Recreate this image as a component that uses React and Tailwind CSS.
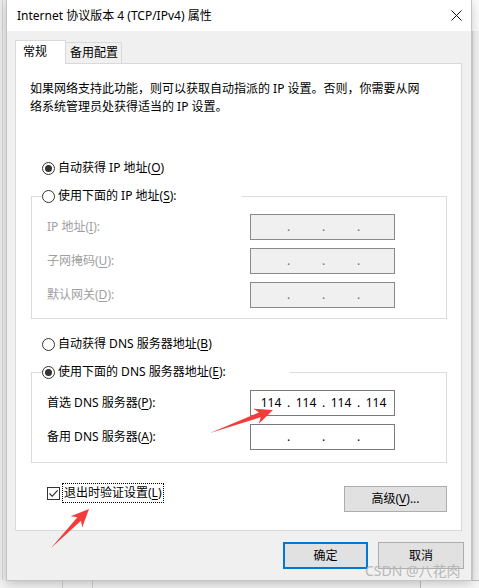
import React from "react";

const U = ({ children }) => <span className="underline underline-offset-[2px]">{children}</span>;

function Radio({ checked }) {
  return (
    <span className="flex h-[13px] w-[13px] shrink-0 items-center justify-center rounded-full border border-[#333333] bg-white">
      {checked && <span className="h-[7px] w-[7px] rounded-full bg-[#333333]" />}
    </span>
  );
}

function IpBox({ value, disabled }) {
  const parts = value || ["", "", "", ""];
  return (
    <div
      className={
        "flex h-[26px] w-[145px] items-center border pl-[6px] " +
        (disabled ? "border-[#8a8a8a] bg-[#f0f0f0] text-[#6d6d6d]" : "border-[#7a7a7a] bg-white text-black")
      }
    >
      {parts.map((p, i) => (
        <React.Fragment key={i}>
          <span className="w-[28px] text-center">{p}</span>
          {i < 3 && <span className="w-[7px] text-center">.</span>}
        </React.Fragment>
      ))}
    </div>
  );
}

function Row({ label, disabled, value }) {
  return (
    <div className="flex items-center">
      <span className={"w-[203px] " + (disabled ? "text-[#a0a0a0]" : "text-black")}>{label}</span>
      <IpBox disabled={disabled} value={value} />
    </div>
  );
}

export default function App() {
  return (
    <div className='relative flex h-[588px] w-[479px] flex-col overflow-hidden bg-[#f0f0f0] text-[12px] leading-[16px] text-black font-[family-name:"Noto_Sans","Noto_Sans_CJK_SC",sans-serif]'>
      <div className="flex h-[580px]">
        {/* left background strip */}
        <div className="h-full w-[7px] shrink-0 bg-[#ececec]">
          <div className="ml-[2px] h-full w-[1px] bg-[#d4d4d4]" />
        </div>

        {/* dialog */}
        <div className="relative z-10 flex h-[580px] w-[464px] shrink-0 flex-col bg-[#f0f0f0] shadow-[0_0_0_1px_#c4c4c4,0_3px_10px_rgba(0,0,0,0.22)]">
          {/* title bar */}
          <div className="flex h-[31px] items-center justify-between bg-white pl-[10px] pr-[10px]">
            <span className="text-[12px]">Internet 协议版本 4 (TCP/IPv4) 属性</span>
            <svg width="11" height="11" viewBox="0 0 11 11" className="mr-[-1px]">
              <path d="M0.5 0.5 L10.5 10.5 M10.5 0.5 L0.5 10.5" stroke="#111" strokeWidth="1" fill="none" />
            </svg>
          </div>

          <div className="flex flex-col pl-[8px] pt-[9px]">
            {/* tabs */}
            <div className="relative z-10 flex h-[23px] items-end">
              <div className="mb-[-1px] flex h-[24px] w-[51px] items-start border border-b-0 border-[#d9d9d9] bg-white pl-[7px] pt-[3px]">
                常规
              </div>
              <div className="flex h-[21px] w-[56px] items-start border border-b-0 border-l-0 border-[#d9d9d9] bg-[#f0f0f0] pl-[4px] pt-[2px]">
                备用配置
              </div>
            </div>

            {/* panel */}
            <div className="flex h-[468px] w-[447px] flex-col border border-[#d9d9d9] bg-white">
              <p className="whitespace-nowrap pl-[14px] pt-[16px] leading-[18px]">
                如果网络支持此功能，则可以获取自动指派的 IP 设置。否则，你需要从网
                <br />
                络系统管理员处获得适当的 IP 设置。
              </p>

              <div className="ml-[26px] mt-[44px] flex h-[16px] items-center gap-[3px]">
                <Radio checked />
                <span>
                  自动获得 IP 地址(<U>O</U>)
                </span>
              </div>

              <div className="relative ml-[26px] mt-[12px] flex h-[16px] w-[200px] items-center gap-[3px] bg-white">
                <Radio />
                <span>
                  使用下面的 IP 地址(<U>S</U>):
                </span>
              </div>
              <div className="ml-[15px] mr-[14px] -mt-[8px] flex flex-col gap-[8px] border border-[#dcdcdc] pb-[10px] pl-[15px] pt-[17px]">
                <Row disabled label={<>IP 地址(<U>I</U>):</>} />
                <Row disabled label={<>子网掩码(<U>U</U>):</>} />
                <Row disabled label={<>默认网关(<U>D</U>):</>} />
              </div>

              <div className="ml-[26px] mt-[17px] flex h-[16px] items-center gap-[3px]">
                <Radio />
                <span>
                  自动获得 DNS 服务器地址(<U>B</U>)
                </span>
              </div>

              <div className="relative ml-[26px] mt-[12px] flex h-[16px] w-[248px] items-center gap-[3px] bg-white">
                <Radio checked />
                <span>
                  使用下面的 DNS 服务器地址(<U>E</U>):
                </span>
              </div>
              <div className="ml-[15px] mr-[14px] -mt-[8px] flex flex-col gap-[8px] border border-[#dcdcdc] pb-[12px] pl-[15px] pt-[17px]">
                <Row label={<>首选 DNS 服务器(<U>P</U>):</>} value={["114", "114", "114", "114"]} />
                <Row label={<>备用 DNS 服务器(<U>A</U>):</>} />
              </div>

              <div className="ml-[31px] mr-[14px] mt-[20px] flex items-start justify-between">
                <div className="flex h-[20px] items-center gap-[2px]">
                  <span className="flex h-[13px] w-[13px] items-center justify-center border border-[#333333] bg-white">
                    <svg width="11" height="11" viewBox="0 0 11 11">
                      <path d="M1.5 5.5 L4.2 8.3 L9.6 2.4" stroke="#222" strokeWidth="1.1" fill="none" />
                    </svg>
                  </span>
                  <span className="flex h-[20px] items-center border border-dotted border-black px-[1px]">
                    退出时验证设置(<U>L</U>)
                  </span>
                </div>
                <button className="mt-[3px] flex h-[26px] w-[103px] items-center justify-center border border-[#adadad] bg-[#e1e1e1]">
                  高级(<U>V</U>)...
                </button>
              </div>
            </div>
          </div>

          {/* bottom buttons */}
          <div className="mt-[11px] flex justify-end gap-[10px] pr-[7px]">
            <button className="flex h-[27px] w-[85px] items-center justify-center border-2 border-[#0078d7] bg-[#e1e1e1]">
              确定
            </button>
            <button className="flex h-[27px] w-[86px] items-center justify-center border border-[#adadad] bg-[#e1e1e1]">
              取消
            </button>
          </div>
        </div>

        {/* right background strip */}
        <div className="flex h-full w-[8px] shrink-0 flex-col">
          <div className="h-[31px] bg-[#fafafa]" />
          <div className="flex flex-1 bg-[#f0f0f0]">
            <div className="ml-[1px] h-full w-[1px] bg-[#d6d6d6]" />
          </div>
        </div>
      </div>

      {/* bottom background strip */}
      <div className="flex h-[8px] bg-[#f0f0f0]">
        <div className="ml-[62px] h-full w-[1px] bg-[#cfcfcf]" />
        <div className="ml-[29px] h-full w-[1px] bg-[#cfcfcf]" />
        <div className="ml-[327px] h-full w-[59px] border-l border-t border-[#bdbdbd] bg-[#f5f5f5]" />
      </div>

      {/* watermark */}
      <div className="pointer-events-none absolute left-[365px] top-[561px] z-20 whitespace-nowrap text-[14px] leading-[20px] text-[#b8b8b8]">
        CSDN @八花肉
      </div>

      {/* red arrows */}
      <svg className="pointer-events-none absolute left-0 top-0 z-30" width="479" height="588" viewBox="0 0 479 588">
        <polygon
          points="210,433 258.9,412.5 253.4,408.7 273,410 258.8,423.7 260.7,417.2"
          fill="#f43b3b"
        />
        <polygon
          points="51,548 77.4,517.3 70.8,516.3 89,509 82.2,527.5 81,520.7"
          fill="#f43b3b"
        />
      </svg>
    </div>
  );
}
